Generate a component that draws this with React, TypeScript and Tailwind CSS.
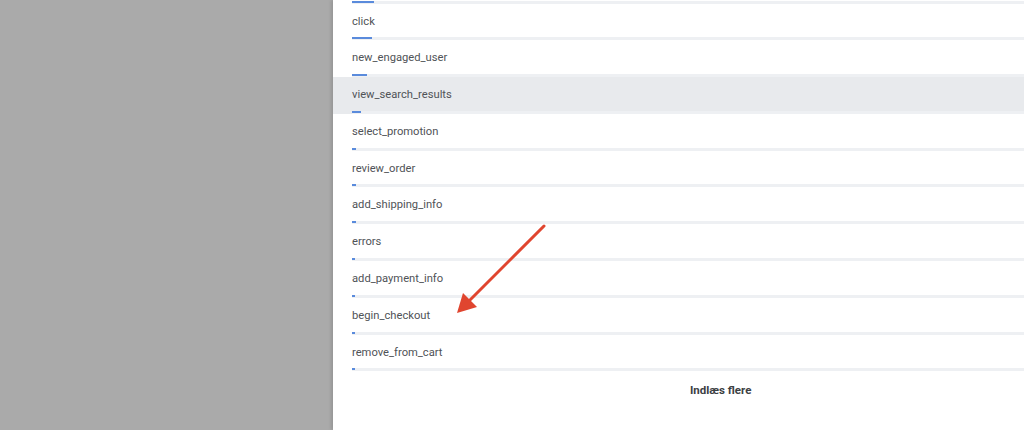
const events = [
  { name: 'click', bar: 20 },
  { name: 'new_engaged_user', bar: 15 },
  { name: 'view_search_results', bar: 9, active: true },
  { name: 'select_promotion', bar: 4 },
  { name: 'review_order', bar: 4 },
  { name: 'add_shipping_info', bar: 4 },
  { name: 'errors', bar: 3 },
  { name: 'add_payment_info', bar: 3 },
  { name: 'begin_checkout', bar: 3 },
  { name: 'remove_from_cart', bar: 3 },
];

function Track({ width }: { width: number }) {
  return (
    <div className="ml-[19px] h-[3px] bg-[#eef0f3]">
      <div className="h-[2px] bg-[#5a8bdc]" style={{ width }} />
    </div>
  );
}

export default function App() {
  return (
    <div
      className="relative flex h-[430px] w-[1024px] overflow-hidden bg-[#aaaaaa]"
      style={{ fontFamily: 'Roboto, "Noto Sans", sans-serif' }}
    >
      <div className="w-[333px] shrink-0" />
      <div className="flex-1 bg-white shadow-[-2px_0_3px_rgba(0,0,0,0.12)]">
        <div className="pt-[0.5px]">
          <Track width={22} />
        </div>
        {events.map((e) => (
          <div key={e.name} className={e.active ? 'bg-[#e8eaed]' : ''}>
            <div className="flex h-[33.8px] items-center pl-[19px] pt-[3px] text-[11.2px] text-[#505357]">
              {e.name}
            </div>
            <Track width={e.bar} />
          </div>
        ))}
        <div className="flex h-[38px] items-center pl-[357px] pt-[1px] text-[11.5px] font-bold text-[#3c4043]">
          Indlæs flere
        </div>
      </div>
      <svg className="pointer-events-none absolute left-0 top-0" width="1024" height="430">
        <line x1="544" y1="226" x2="470" y2="300" stroke="#e0452f" strokeWidth="3" strokeLinecap="round" />
        <polygon points="457,313 463,293 477,307" fill="#e0452f" />
      </svg>
    </div>
  );
}
